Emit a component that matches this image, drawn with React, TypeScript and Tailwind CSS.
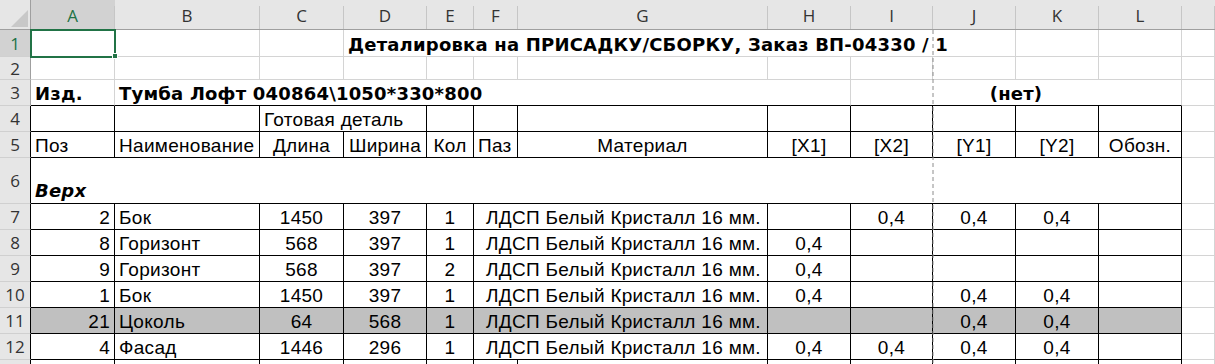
import React from 'react';

const GRID = 'border-r-[#d4d4d4]';
const GRID_B = 'border-b-[#d4d4d4]';
const INK = 'border-r-black';
const INK_B = 'border-b-black';

// bold sheet text is set in a wider face than the body
const STRONG = "font-['DejaVu_Sans',Verdana,sans-serif] text-[18px] font-bold tracking-[0.2px]";

type CellProps = {
  children?: React.ReactNode;
  span?: string;
  r?: string;
  b?: string;
  align?: 'left' | 'center' | 'right';
  className?: string;
};

function Cell({ children, span = '', r = GRID, b = GRID_B, align = 'left', className = '' }: CellProps) {
  const justify = align === 'center' ? 'justify-center' : align === 'right' ? 'justify-end' : 'justify-start';
  return (
    <div
      className={`flex items-end whitespace-nowrap border-r border-b px-[4px] pb-[1px] leading-[20px] ${r} ${b} ${justify} ${span} ${className}`}
    >
      {children}
    </div>
  );
}

function ColHead({ label, active = false }: { label: string; active?: boolean }) {
  return (
    <div className={`flex border-b border-b-[#9f9f9f] ${active ? 'bg-[#d2d2d2] text-[#217346]' : 'bg-[#e6e6e6] text-[#333]'}`}>
      <div className="flex flex-1 items-center justify-center pt-[2px]">{label}</div>
      <div className="h-[23px] w-px self-end bg-[#c6c6c6]" />
    </div>
  );
}

function RowHead({ n, active = false, edge = 'border-r-[#9f9f9f]' }: { n: number | string; active?: boolean; edge?: string }) {
  return (
    <div
      className={`flex items-center justify-center border-r border-b border-b-[#d0d0d0] pt-[1px] font-['Open_Sans',sans-serif] text-[17px] tracking-normal ${edge} ${active ? 'bg-[#d2d2d2] text-[#217346]' : 'bg-[#e6e6e6] text-[#333]'}`}
    >
      {n}
    </div>
  );
}

type Part = {
  n: number;
  pos: string;
  name: string;
  len: string;
  wid: string;
  qty: string;
  x1: string;
  x2: string;
  y1: string;
  y2: string;
  shade?: boolean;
};

const material = 'ЛДСП Белый Кристалл 16 мм.';

const parts: Part[] = [
  { n: 7, pos: '2', name: 'Бок', len: '1450', wid: '397', qty: '1', x1: '', x2: '0,4', y1: '0,4', y2: '0,4' },
  { n: 8, pos: '8', name: 'Горизонт', len: '568', wid: '397', qty: '1', x1: '0,4', x2: '', y1: '', y2: '' },
  { n: 9, pos: '9', name: 'Горизонт', len: '568', wid: '397', qty: '2', x1: '0,4', x2: '', y1: '', y2: '' },
  { n: 10, pos: '1', name: 'Бок', len: '1450', wid: '397', qty: '1', x1: '0,4', x2: '', y1: '0,4', y2: '0,4' },
  { n: 11, pos: '21', name: 'Цоколь', len: '64', wid: '568', qty: '1', x1: '', x2: '', y1: '0,4', y2: '0,4', shade: true },
  { n: 12, pos: '4', name: 'Фасад', len: '1446', wid: '296', qty: '1', x1: '0,4', x2: '0,4', y1: '0,4', y2: '0,4' },
];

function PartRow({ p }: { p: Part }) {
  const bg = p.shade ? 'bg-[#c0c0c0]' : '';
  return (
    <>
      <RowHead n={p.n} edge="border-r-black" />
      <Cell r={INK} b={INK_B} align="right" className={bg}>{p.pos}</Cell>
      <Cell r={INK} b={INK_B} className={bg}>{p.name}</Cell>
      <Cell r={INK} b={INK_B} align="center" className={bg}>{p.len}</Cell>
      <Cell r={INK} b={INK_B} align="center" className={bg}>{p.wid}</Cell>
      <Cell r={INK} b={INK_B} align="center" className={bg}>{p.qty}</Cell>
      <Cell r={INK} b={INK_B} span="col-span-2" align="center" className={`pl-[10px] ${bg}`}>{material}</Cell>
      <Cell r={INK} b={INK_B} align="center" className={bg}>{p.x1}</Cell>
      <Cell r={INK} b={INK_B} align="center" className={bg}>{p.x2}</Cell>
      <Cell r={INK} b={INK_B} align="center" className={bg}>{p.y1}</Cell>
      <Cell r={INK} b={INK_B} align="center" className={bg}>{p.y2}</Cell>
      <Cell r={INK} b={INK_B} className={bg} />
      <Cell />
    </>
  );
}

export default function App() {
  const letters = ['B', 'C', 'D', 'E', 'F', 'G', 'H', 'I', 'J', 'K', 'L', ''];
  const headCells = ['Поз', 'Наименование', 'Длина', 'Ширина', 'Кол', 'Паз', 'Материал', '[X1]', '[X2]', '[Y1]', '[Y2]', 'Обозн.'];
  const headAlign: ('left' | 'center')[] = ['left', 'left', 'center', 'center', 'center', 'left', 'center', 'center', 'center', 'center', 'center', 'center'];

  return (
    <div className="relative h-[364px] w-[1215px] overflow-hidden bg-white font-['Liberation_Sans',Arial,sans-serif] text-[19px] tracking-[0.3px] text-black">
      <div className="grid grid-cols-[31px_84px_145px_84px_83px_47px_44px_250px_83px_82px_83px_83px_83px_33px] grid-rows-[30px_27px_23px_26px_26px_26px_46px_26px_26px_26px_26px_26px_26px_26px]">
        {/* column headers */}
        <div className="flex items-end justify-end border-r border-b border-r-[#9f9f9f] border-b-[#9f9f9f] bg-[#e6e6e6] pr-[2px] pb-[2px]">
          <svg width="17" height="17" viewBox="0 0 17 17">
            <polygon points="17,0 17,17 0,17" fill="#c8c8c8" />
          </svg>
        </div>
        <div className="contents font-['Open_Sans',sans-serif] text-[17px] tracking-normal">
          <ColHead label="A" active />
          {letters.map((l, i) => (
            <ColHead key={i} label={l} />
          ))}
        </div>

        {/* row 1 — title */}
        <RowHead n={1} active />
        <Cell />
        <Cell />
        <Cell />
        <Cell span="col-span-7" className={STRONG}>
          Деталировка на ПРИСАДКУ/СБОРКУ, Заказ ВП-04330 / 1
        </Cell>
        <Cell />
        <Cell />
        <Cell />

        {/* row 2 */}
        <RowHead n={2} />
        {Array.from({ length: 13 }).map((_, i) => (
          <Cell key={i} />
        ))}

        {/* row 3 — product */}
        <RowHead n={3} />
        <Cell b={INK_B} className={STRONG}>Изд.</Cell>
        <Cell b={INK_B} span="col-span-7" className={STRONG}>
          Тумба Лофт 040864\1050*330*800
        </Cell>
        <Cell b={INK_B} span="col-span-4" align="center" className={STRONG}>
          (нет)
        </Cell>
        <Cell />

        {/* row 4 */}
        <RowHead n={4} edge="border-r-black" />
        <Cell r={INK} b={INK_B} />
        <Cell r={INK} b={INK_B} />
        <Cell r={INK} b={INK_B} span="col-span-2">Готовая деталь</Cell>
        {Array.from({ length: 8 }).map((_, i) => (
          <Cell key={i} r={INK} b={INK_B} />
        ))}
        <Cell />

        {/* row 5 — column titles */}
        <RowHead n={5} edge="border-r-black" />
        {headCells.map((t, i) => (
          <Cell key={i} r={INK} b={INK_B} align={headAlign[i]}>
            {t}
          </Cell>
        ))}
        <Cell />

        {/* row 6 — group */}
        <RowHead n={6} edge="border-r-black" />
        <Cell r={INK} b={INK_B} span="col-span-12" className={`pb-[2px] italic ${STRONG}`}>
          Верх
        </Cell>
        <Cell />

        {parts.map((p) => (
          <PartRow key={p.n} p={p} />
        ))}

        {/* row 13, cut off */}
        <RowHead n="" edge="border-r-black" />
        {Array.from({ length: 12 }).map((_, i) => (
          <Cell key={i} r={INK} b={INK_B} />
        ))}
        <Cell />
      </div>

      {/* page break */}
      <svg className="pointer-events-none absolute top-[30px] left-[932px]" width="2" height="334">
        <line x1="1" y1="0" x2="1" y2="334" stroke="#8c8c8c" strokeWidth="1" strokeDasharray="4 3" />
      </svg>

      {/* active cell A1 */}
      <div className="pointer-events-none absolute top-[29px] left-[30px] h-[29px] w-[86px] border-2 border-[#217346]" />
      <div className="pointer-events-none absolute top-[53px] left-[112px] h-[6px] w-[6px] border border-white bg-[#217346]" />
    </div>
  );
}
